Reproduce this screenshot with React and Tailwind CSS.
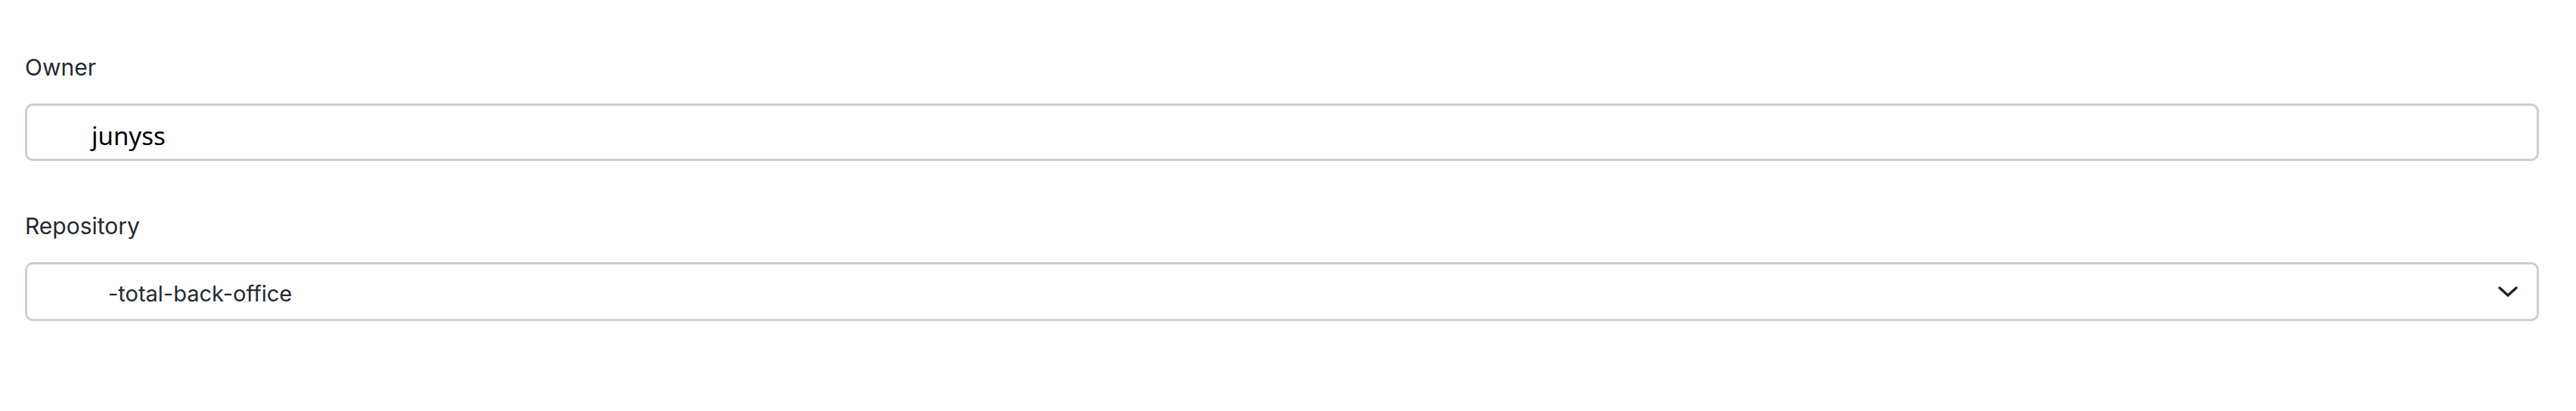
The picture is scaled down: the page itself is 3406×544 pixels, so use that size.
import React from 'react'

export default function App() {
  return (
    <div className="w-[3406px] h-[544px] bg-white pl-[33px] pr-[49px] pt-[72px] flex flex-col font-['Inter',sans-serif]">
      {/* Owner */}
      <label className="text-[30px] leading-[34px] text-[#24292f]">Owner</label>
      <div className="mt-[31px] h-[76px] flex items-center border-[3px] border-[#c9d0d4] rounded-[10px] pl-[85px] pt-[10px]">
        <span className="text-[33px] text-black font-['Noto_Sans',sans-serif]">junyss</span>
      </div>

      {/* Repository */}
      <label className="mt-[69px] text-[30px] leading-[34px] text-[#24292f]">Repository</label>
      <div className="mt-[31px] h-[78px] flex items-center justify-between border-[3px] border-[#c9d0d4] rounded-[10px] pl-[107px] pr-[24px]">
        <span className="text-[29px] text-[#24292f] pt-[5px]">-total-back-office</span>
        <svg width="28" height="16" viewBox="0 0 28 16" fill="none" stroke="#1f2328" strokeWidth="3.5" strokeLinecap="round" strokeLinejoin="round">
          <path d="M3 3l11 10L25 3" />
        </svg>
      </div>
    </div>
  )
}
